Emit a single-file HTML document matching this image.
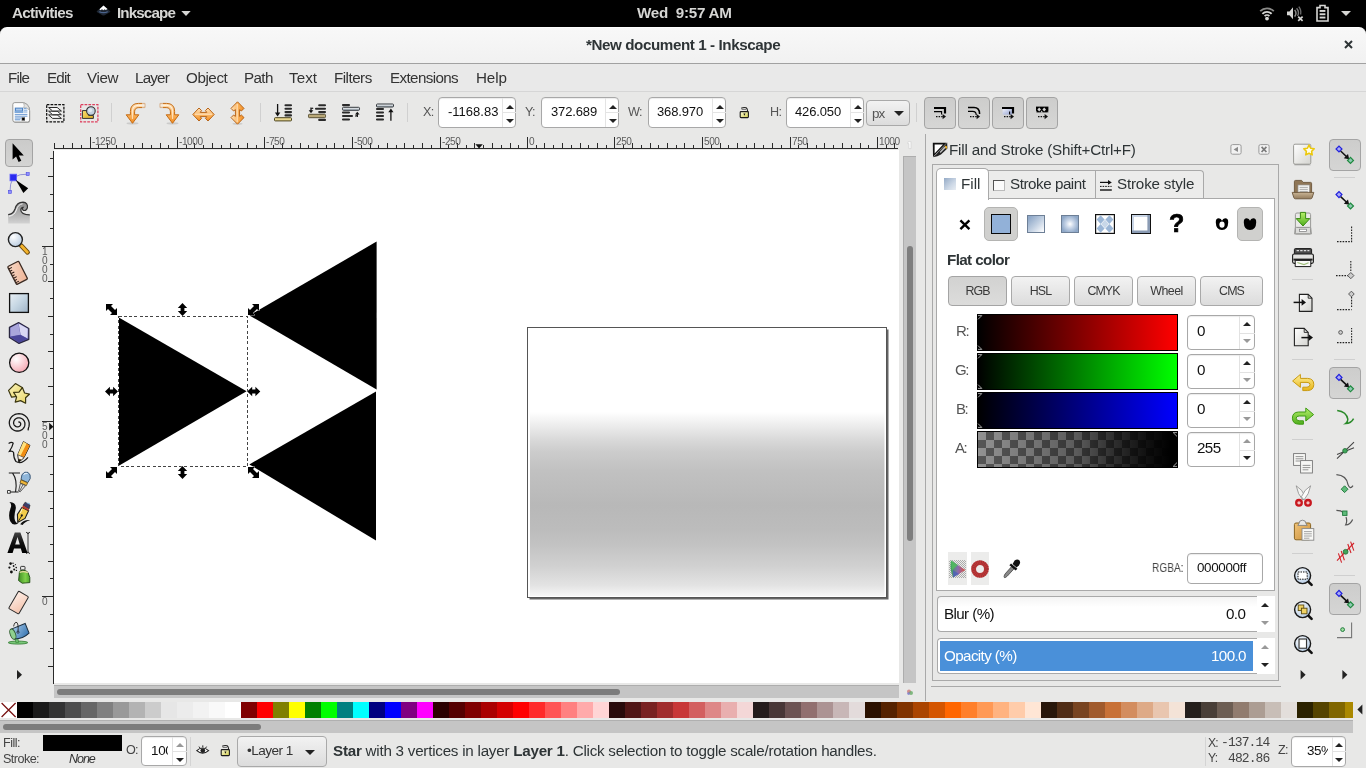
<!DOCTYPE html>
<html><head><meta charset="utf-8"><title>Inkscape</title>
<style>
*{box-sizing:border-box;margin:0;padding:0}
html,body{width:1366px;height:768px;overflow:hidden;background:#e8e8e7;-webkit-font-smoothing:antialiased;font-family:"Liberation Sans",sans-serif;color:#2e3436}
.a{position:absolute}
.t{position:absolute;white-space:nowrap;line-height:1;will-change:transform}
svg{position:absolute;overflow:visible}
#topbar{left:0;top:0;width:1366px;height:28px;background:#000}
#topbar .t{color:#d6d6d4;font-weight:bold;font-size:15.2px;top:5px}
#titlebar{left:0;top:27px;width:1366px;height:37px;background:linear-gradient(#f8f8f8,#f1f1f1);border-top-left-radius:7px;border-top-right-radius:7px;border-bottom:1px solid #a1a1a1;border-top:1px solid #fff}
#menubar{left:0;top:64px;width:1366px;height:28px;background:#e9e9e9;border-bottom:1px solid #d6d6d6}
#menubar .t{font-size:15.2px;top:5.6px;color:#333}
.entry{position:absolute;background:#fff;border:1px solid #a8a8a8;border-radius:4px;box-shadow:inset 0 1px 1px rgba(0,0,0,.08)}
.btn{position:absolute;border:1px solid #a9a9a9;border-radius:4px;background:linear-gradient(#f2f2f2,#dcdcdc)}
.btnp{position:absolute;border:1px solid #a4a4a4;border-radius:4px;background:linear-gradient(#cdcdcc,#d6d6d5)}
.lbl{color:#555;font-size:12.6px;letter-spacing:-.7px}
.val{color:#111;font-size:13px;letter-spacing:-.14px}
.sep{position:absolute;width:1px;background:#d0d0d0}
.hsep{position:absolute;height:1px;background:#cfcfcf}
.up{position:absolute;width:0;height:0;border-left:4px solid transparent;border-right:4px solid transparent;border-bottom:4px solid #222}
.dn{position:absolute;width:0;height:0;border-left:4px solid transparent;border-right:4px solid transparent;border-top:4px solid #222}
.g.up{border-bottom-color:#999}.g.dn{border-top-color:#999}
</style></head><body>
<!-- TOP BAR -->
<div id="topbar" class="a">
 <span class="t" style="left:12px;letter-spacing:-.68px">Activities</span>
 <span class="t" style="left:116.8px;letter-spacing:-.88px">Inkscape</span>
 <span class="t" style="left:637px;letter-spacing:-.27px;word-spacing:0">Wed&nbsp; 9:57 AM</span>
 <svg style="left:96px;top:5px" width="15" height="11" viewBox="0 0 15 11"><path d="M7.5 .5 L14.3 6.3 Q14.5 7.2 13.4 7.6 L8.6 10.2 Q7.5 10.7 6.4 10.2 L1.6 7.6 Q.5 7.2 .7 6.3 Z" fill="#1f2733"/><path d="M7.5 .6 L11.5 4 L9.8 5 L8.6 4.2 L7.4 5.2 L6 4.2 L4.4 5.2 L3.4 4.2 Z" fill="#fff"/><path d="M2.5 7 Q7.5 9.6 12.5 7 L11.2 6.2 Q7.5 8 3.8 6.2Z" fill="#5e7fb5" opacity=".7"/></svg>
 <svg style="left:181px;top:11px" width="10" height="5" viewBox="0 0 10 5"><path d="M.3 0H9.7L5 5Z" fill="#d6d6d4"/></svg>
 <!-- wifi -->
 <svg style="left:1259px;top:6px" width="16" height="15" viewBox="0 0 16 15"><g fill="none" stroke-linecap="butt"><path d="M1.2 5.2 A9.6 9.6 0 0 1 14.8 5.2" stroke="#8a8a88" stroke-width="1.8"/><path d="M3.4 7.8 A6.5 6.5 0 0 1 12.6 7.8" stroke="#d6d6d4" stroke-width="1.9"/><path d="M5.6 10.1 A3.4 3.4 0 0 1 10.4 10.1" stroke="#d6d6d4" stroke-width="1.8"/></g><circle cx="8" cy="12.6" r="1.9" fill="#d6d6d4"/></svg>
 <!-- volume -->
 <svg style="left:1286px;top:5px" width="18" height="17" viewBox="0 0 18 17"><path d="M1 6.5H3.5L7 2.2V14.2L3.5 10.2H1Z" fill="#d6d6d4"/><g fill="none"><path d="M8.6 5 A4.6 4.6 0 0 1 8.6 11.6" stroke="#8d8d8b" stroke-width="1.5"/><path d="M10.6 3.2 A7 7 0 0 1 11.6 11" stroke="#777" stroke-width="1.4"/><path d="M12.8 1.6 A9.4 9.4 0 0 1 14.6 9.5" stroke="#6a6a6a" stroke-width="1.4"/></g><path d="M12.2 11.6 L16.6 15.8 M16.6 11.6 L12.2 15.8" stroke="#d6d6d4" stroke-width="1.7"/></svg>
 <!-- battery -->
 <svg style="left:1316px;top:5px" width="13" height="17" viewBox="0 0 13 17"><path d="M4 .5H9V2.6H12V16H1V2.6H4Z" fill="none" stroke="#d6d6d4" stroke-width="1.6"/><rect x="3.6" y="5" width="5.8" height="1.9" fill="#d6d6d4"/><rect x="3.6" y="8.3" width="5.8" height="1.9" fill="#d6d6d4"/><rect x="3.6" y="11.6" width="5.8" height="1.9" fill="#d6d6d4"/></svg>
 <svg style="left:1341px;top:11px" width="10" height="5" viewBox="0 0 10 5"><path d="M0 0H10L5 5Z" fill="#d6d6d4"/></svg>
</div>
<!-- TITLE BAR -->
<div class="a" style="left:0;top:27px;width:1366px;height:10px;background:#000"></div>
<div id="titlebar" class="a">
 <span class="t" id="title" style="left:586px;top:9px;font-size:15.2px;font-weight:bold;color:#2e3436;letter-spacing:-.42px">*New document 1 - Inkscape</span>
 <svg style="left:1343.5px;top:12.4px" width="9" height="9" viewBox="0 0 9 9"><path d="M1 1L8 8M8 1L1 8" stroke="#2e3436" stroke-width="2"/></svg>
</div>
<!-- MENU BAR -->
<div id="menubar" class="a">
 <span class="t" style="left:8.4px;letter-spacing:-0.82px">File</span>
 <span class="t" style="left:47.4px;letter-spacing:-0.82px">Edit</span>
 <span class="t" style="left:87px;letter-spacing:-0.42px">View</span>
 <span class="t" style="left:135.4px;letter-spacing:-0.82px">Layer</span>
 <span class="t" style="left:186px;letter-spacing:-0.42px">Object</span>
 <span class="t" style="left:244px;letter-spacing:-0.62px">Path</span>
 <span class="t" style="left:289px;letter-spacing:0.08px">Text</span>
 <span class="t" style="left:334px;letter-spacing:-0.52px">Filters</span>
 <span class="t" style="left:390px;letter-spacing:-0.62px">Extensions</span>
 <span class="t" style="left:476px;letter-spacing:-0.12px">Help</span>
</div>
<!-- TOOLBAR -->
<svg width="0" height="0" style="position:absolute"><defs>
 <linearGradient id="og" x1="0" y1="0" x2="0" y2="1"><stop offset="0" stop-color="#ffe3bd"/><stop offset=".55" stop-color="#fbb560"/><stop offset="1" stop-color="#f08a1d"/></linearGradient>
 <linearGradient id="ogh" x1="0" y1="0" x2="1" y2="0"><stop offset="0" stop-color="#ffe3bd"/><stop offset=".5" stop-color="#fbb560"/><stop offset="1" stop-color="#f08a1d"/></linearGradient>
 <linearGradient id="paper" x1="0" y1="0" x2="1" y2="1"><stop offset="0" stop-color="#fff"/><stop offset="1" stop-color="#d4d4d0"/></linearGradient>
 <linearGradient id="silv" x1="0" y1="0" x2="0" y2="1"><stop offset="0" stop-color="#fff"/><stop offset="1" stop-color="#9aa7b3"/></linearGradient>
</defs></svg>
<!-- icon: select all in all layers -->
<svg style="left:12px;top:102px" width="19" height="21" viewBox="0 0 19 21"><path d="M.8 2.6Q.8 .6 2.8 .6H11.6Q17.4 2.4 17.6 8.4V18Q17.6 20 15.6 20H2.8Q.8 20 .8 18Z" fill="#6a6a6a" opacity=".55" transform="translate(.5 .7)"/><path d="M.8 2.6Q.8 .6 2.8 .6H11.6Q17.4 2.4 17.6 8.4V18Q17.6 20 15.6 20H2.8Q.8 20 .8 18Z" fill="#fdfdfd" stroke="#8e8e8c" stroke-width=".9"/><path d="M11.6 .8Q12.8 4 11.6 5.8Q15 5.2 17.4 8Q17 2.6 11.6 .8Z" fill="#e2e2e0" stroke="#9a9a98" stroke-width=".6"/><rect x="2.8" y="5.6" width="8.4" height="5.4" fill="#4d82c4"/><rect x="4" y="6.6" width="6" height="2" fill="#a9c7ea"/><rect x="2.8" y="8.8" width="8.4" height="2.2" fill="#7fa9da"/><path d="M12 6.4H14.6M12 8.2H15.4M12 10H15.4" stroke="#6b9bd4" stroke-width=".9"/><path d="M2.8 12.4H15.4M2.8 14.2H15.4" stroke="#5c8fce" stroke-width=".9"/><path d="M2.8 16H9.4M2.8 17.8H8.4" stroke="#5c8fce" stroke-width="1"/><path d="M9.6 15.6H13V16.4L12 17L13 17.6V18.4H9.6V17.6L10.6 17L9.6 16.4Z" fill="#000"/></svg>
<!-- icon: layers dashed -->
<svg style="left:46px;top:104px" width="19" height="19" viewBox="0 0 19 19"><rect x=".7" y=".7" width="17.2" height="17.2" fill="none" stroke="#111" stroke-width="1.25" stroke-dasharray="2.7 1.15"/><g fill="#fbfbfb" stroke="#1e1e1e" stroke-width=".95" stroke-linejoin="round"><path d="M2.6 10.9H11.2L15.4 14.4H6.6Z"/><path d="M2.6 7.2H11.2L15.4 10.7H6.6Z"/><path d="M2.6 3.5H11.2L15.4 7H6.6Z"/></g></svg>
<!-- icon: select in all -->
<svg style="left:80px;top:104px" width="19" height="19" viewBox="0 0 19 19"><defs><linearGradient id="ylw" x1="0" y1="0" x2="1" y2="1"><stop offset="0" stop-color="#fbe072"/><stop offset="1" stop-color="#dcae22"/></linearGradient></defs><rect x=".7" y=".7" width="17.2" height="17.2" fill="none" stroke="#dd3f5e" stroke-width="1.25" stroke-dasharray="2.7 1.15"/><path d="M2.4 6.6H8L8.6 11.4H13.4V14.4H2.4Z" fill="url(#ylw)" stroke="#333" stroke-width="1"/><circle cx="10.9" cy="7" r="4.3" fill="#c3d2df" stroke="#333" stroke-width="1.1"/><circle cx="10.2" cy="6.2" r="2" fill="#e4ecf3" opacity=".9"/></svg>
<div class="sep" style="left:111px;top:103px;height:19px"></div>
<!-- rotate ccw -->
<svg style="left:125px;top:101px" width="22" height="24" viewBox="0 0 22 24"><ellipse cx="7.5" cy="22.4" rx="6" ry="1.1" fill="#000" opacity=".12"/><path d="M20 2.4H13.5Q5.4 2.4 5.4 10.5V13.8H1.2L7.5 22.3L13.8 13.8H9.6V10.8Q9.6 6.6 13.8 6.6H20Z" fill="url(#og)" stroke="#c46a12" stroke-width="1" stroke-linejoin="round"/><path d="M19.5 4.4H13.5Q7.4 4.4 7.4 10.8V18" fill="none" stroke="#fff" stroke-width=".9" opacity=".75"/><rect x="17" y="1" width="5" height="7" fill="#e8e8e7" opacity=".55"/></svg>
<!-- rotate cw -->
<svg style="left:157.5px;top:101px" width="22" height="24" viewBox="0 0 22 24"><g transform="translate(22,0) scale(-1,1)"><ellipse cx="7.5" cy="22.4" rx="6" ry="1.1" fill="#000" opacity=".12"/><path d="M20 2.4H13.5Q5.4 2.4 5.4 10.5V13.8H1.2L7.5 22.3L13.8 13.8H9.6V10.8Q9.6 6.6 13.8 6.6H20Z" fill="url(#og)" stroke="#c46a12" stroke-width="1" stroke-linejoin="round"/><path d="M19.5 4.4H13.5Q7.4 4.4 7.4 10.8V18" fill="none" stroke="#fff" stroke-width=".9" opacity=".75"/><rect x="17" y="1" width="5" height="7" fill="#e8e8e7" opacity=".55"/></g></svg>
<!-- flip h -->
<svg style="left:191.5px;top:107px" width="23" height="15" viewBox="0 0 23 15"><path d="M.8 7.5L7 1L9.6 3.6L8.2 5.4H14.8L13.4 3.6L16 1L22.2 7.5L16 14L13.4 11.4L14.8 9.6H8.2L9.6 11.4L7 14Z" fill="url(#og)" stroke="#b8651a" stroke-width="1" stroke-linejoin="round"/><path d="M3 7.2H20" stroke="#fff" stroke-width=".9" opacity=".7"/></svg>
<!-- flip v -->
<svg style="left:230px;top:101px" width="15" height="24" viewBox="0 0 15 24"><ellipse cx="7.5" cy="22.8" rx="5" ry="1" fill="#000" opacity=".12"/><path d="M7.5 .8L14 7.4L11.4 10L9.6 8.6V15.4L11.4 14L14 16.6L7.5 23.2L1 16.6L3.6 14L5.4 15.4V8.6L3.6 10L1 7.4Z" fill="url(#ogh)" stroke="#b8651a" stroke-width="1" stroke-linejoin="round"/><path d="M7.2 3V21" stroke="#fff" stroke-width=".9" opacity=".7"/></svg>
<div class="sep" style="left:260px;top:103px;height:19px"></div>
<!-- lower to bottom -->
<svg style="left:274px;top:103px" width="18" height="19" viewBox="0 0 18 19"><g stroke="#2a2a2a" stroke-width="2.1" stroke-linecap="round"><path d="M11.5 2.2H17M11.5 5.7H17M11.5 9.1H17M11.5 12.4H17"/></g><path d="M3.6 1V11" stroke="#111" stroke-width="1.3"/><path d="M.9 9.6H6.3L3.6 13.4Z" fill="#111"/><rect x=".5" y="14.7" width="17" height="3.2" rx=".8" fill="#ead891" stroke="#4a431f" stroke-width="1"/></svg>
<!-- lower -->
<svg style="left:308px;top:103px" width="18" height="19" viewBox="0 0 18 19"><g stroke="#2a2a2a" stroke-width="2.1" stroke-linecap="round"><path d="M11.2 2.2H17M8 5.7H17M11.2 9.1H17M11.2 16.9H17"/></g><path d="M3 4.6V8" stroke="#111" stroke-width="1.3"/><path d="M5.2 4.9L3.4 5.8" stroke="#111" stroke-width="1.1"/><path d="M.7 7.2H5.3L3 10.2Z" fill="#111"/><rect x=".5" y="11.3" width="17" height="3.4" rx=".9" fill="#b9a878" stroke="#5a5236" stroke-width="1"/></svg>
<!-- raise -->
<svg style="left:342px;top:103px" width="18" height="19" viewBox="0 0 18 19"><g stroke="#2a2a2a" stroke-width="2.1" stroke-linecap="round"><path d="M1 2.1H7M1 9.5H7M1 13H10M1 16.5H7"/></g><rect x=".5" y="4.3" width="17" height="3" rx=".9" fill="url(#silv)" stroke="#33383d" stroke-width="1"/><path d="M15.3 10.6V14" stroke="#111" stroke-width="1.3"/><path d="M13.2 13.3L14.8 12.5" stroke="#111" stroke-width="1.1"/><path d="M13 11.6H17.6L15.3 8.8Z" fill="#111"/></svg>
<!-- raise to top -->
<svg style="left:376px;top:103px" width="18" height="19" viewBox="0 0 18 19"><g stroke="#2a2a2a" stroke-width="2.1" stroke-linecap="round"><path d="M1 6H7M1 9.5H7M1 13H7M1 16.5H7"/></g><rect x=".5" y="1" width="17" height="3" rx=".9" fill="url(#silv)" stroke="#33383d" stroke-width="1"/><path d="M14.9 8V17.8" stroke="#111" stroke-width="1.3"/><path d="M12.3 9.2H17.5L14.9 5.4Z" fill="#111"/></svg>
<div class="sep" style="left:407px;top:103px;height:19px"></div>
<!-- XYWH -->
<span class="t lbl" style="left:422.6px;top:106px">X:</span>
<div class="entry" style="left:438px;top:97px;width:78px;height:31px"><div class="a" style="left:63px;top:0;width:1px;height:29px;background:#e4e4e4"></div><div class="a" style="left:63px;top:14px;width:14px;height:1px;background:#e4e4e4"></div><div class="up" style="left:66.5px;top:6.5px"></div><div class="dn" style="left:66.5px;top:20.5px"></div></div>
<span class="t val" style="left:448.2px;top:105.2px;letter-spacing:0">-1168.83</span>
<span class="t lbl" style="left:524.6px;top:106px">Y:</span>
<div class="entry" style="left:541px;top:97px;width:78px;height:31px"><div class="a" style="left:63px;top:0;width:1px;height:29px;background:#e4e4e4"></div><div class="a" style="left:63px;top:14px;width:14px;height:1px;background:#e4e4e4"></div><div class="up" style="left:66.5px;top:6.5px"></div><div class="dn" style="left:66.5px;top:20.5px"></div></div>
<span class="t val" style="left:551px;top:105.2px">372.689</span>
<span class="t lbl" style="left:628px;top:106px">W:</span>
<div class="entry" style="left:648px;top:97px;width:78px;height:31px"><div class="a" style="left:63px;top:0;width:1px;height:29px;background:#e4e4e4"></div><div class="a" style="left:63px;top:14px;width:14px;height:1px;background:#e4e4e4"></div><div class="up" style="left:66.5px;top:6.5px"></div><div class="dn" style="left:66.5px;top:20.5px"></div></div>
<span class="t val" style="left:657.4px;top:105.2px">368.970</span>
<!-- lock -->
<svg style="left:739px;top:106px" width="11" height="13" viewBox="0 0 11 13"><defs><linearGradient id="lk" x1="0" y1="0" x2="1" y2="1"><stop offset="0" stop-color="#fdfde0"/><stop offset="1" stop-color="#d0cc4a"/></linearGradient></defs><path d="M2.2 2.2Q5 1 7.2 1.8Q8.4 2.6 8.8 6" fill="none" stroke="#222" stroke-width="1.1"/><path d="M2.6 3.4H7" stroke="#555" stroke-width=".8"/><rect x="1.2" y="5.6" width="8.2" height="6" rx=".8" fill="url(#lk)" stroke="#1a1a1a" stroke-width="1.1"/><path d="M4.4 7.6H6.4L5.4 9.8Z" fill="#111"/></svg>
<span class="t lbl" style="left:769.6px;top:106px">H:</span>
<div class="entry" style="left:786px;top:97px;width:78px;height:31px"><div class="a" style="left:63px;top:0;width:1px;height:29px;background:#e4e4e4"></div><div class="a" style="left:63px;top:14px;width:14px;height:1px;background:#e4e4e4"></div><div class="up" style="left:66.5px;top:6.5px"></div><div class="dn" style="left:66.5px;top:20.5px"></div></div>
<span class="t val" style="left:795.3px;top:105.2px">426.050</span>
<div class="btn" style="left:866px;top:100px;width:44px;height:26px"></div>
<span class="t lbl" style="left:871.6px;top:106.5px;font-size:13.4px;letter-spacing:-.9px">px</span>
<div class="dn" style="left:894px;top:111px;border-left-width:5px;border-right-width:5px;border-top-width:5px"></div>
<div class="sep" style="left:916px;top:103px;height:19px"></div>
<div class="btnp" style="left:924px;top:97px;width:32px;height:32px"></div>
<div class="btnp" style="left:958px;top:97px;width:32px;height:32px"></div>
<div class="btnp" style="left:992px;top:97px;width:32px;height:32px"></div>
<div class="btnp" style="left:1026px;top:97px;width:32px;height:32px"></div>
<svg style="left:924px;top:97px" width="136" height="32" viewBox="0 0 136 32">
<defs><g id="darr"><path d="M0 0H7" stroke="#111" stroke-width="1.2" stroke-dasharray="1.5 1.1"/><path d="M6.6 -2.6L10 0L6.6 2.6Z" fill="#111"/></g><linearGradient id="bl3" x1="0" y1="0" x2="1" y2="1"><stop offset="0" stop-color="#f4f6ff"/><stop offset="1" stop-color="#8a9ad0"/></linearGradient></defs>
<!-- 1 -->
<path d="M10 11H21V16.6" fill="none" stroke="#000" stroke-width="2.2"/><path d="M10 14.6H17.6V17.6" fill="none" stroke="#000" stroke-width="1.1"/><use href="#darr" x="12" y="19.6"/>
<!-- 2 -->
<path d="M44 10.6H50Q55.6 10.6 55.6 17" fill="none" stroke="#000" stroke-width="1.5"/><path d="M44 14.4H48.6Q52.2 14.4 52.2 18" fill="none" stroke="#000" stroke-width="1.1"/><use href="#darr" x="46" y="19.6"/>
<!-- 3 -->
<path d="M78.6 12H88V17.6H78.6Z" fill="url(#bl3)" opacity=".9"/><path d="M78 11H89V16.6" fill="none" stroke="#000" stroke-width="2.2"/><path d="M85.6 14.4V17.6" fill="none" stroke="#000" stroke-width="1.1"/><use href="#darr" x="80" y="19.6"/>
<!-- 4 -->
<path d="M112 9.6H124.4V15.4H112Z" fill="#000"/><g fill="#d6d6d5"><path d="M115.2 10.6L117 12.5L115.2 14.4L113.4 12.5Z"/><path d="M120.2 10.6L122 12.5L120.2 14.4L118.4 12.5Z"/><path d="M112 13.4L113 15.4H112ZM117.7 13.6L118.9 15.4H116.5ZM124.4 13.4V15.4H123.4Z"/></g><use href="#darr" x="114" y="19.6"/>
</svg>
<!-- RULERS -->
<svg style="left:0;top:0" width="1366" height="768" viewBox="0 0 1366 768" shape-rendering="crispEdges"><path d="M55 148.5H898" stroke="#2a2a2a" stroke-width="1" fill="none"/><path d="M54.5 143.3V148.5M63.5 144.9V148.5M72.5 143.3V148.5M81.5 144.9V148.5M90.5 136.5V148.5M98.5 144.9V148.5M107.5 143.3V148.5M116.5 144.9V148.5M124.5 143.3V148.5M133.5 144.9V148.5M142.5 143.3V148.5M151.5 144.9V148.5M160.5 143.3V148.5M168.5 144.9V148.5M177.5 136.5V148.5M186.5 144.9V148.5M194.5 143.3V148.5M203.5 144.9V148.5M212.5 143.3V148.5M221.5 144.9V148.5M230.5 143.3V148.5M238.5 144.9V148.5M247.5 143.3V148.5M256.5 144.9V148.5M264.5 136.5V148.5M273.5 144.9V148.5M282.5 143.3V148.5M291.5 144.9V148.5M300.5 143.3V148.5M308.5 144.9V148.5M317.5 143.3V148.5M326.5 144.9V148.5M334.5 143.3V148.5M343.5 144.9V148.5M352.5 136.5V148.5M361.5 144.9V148.5M370.5 143.3V148.5M378.5 144.9V148.5M387.5 143.3V148.5M396.5 144.9V148.5M404.5 143.3V148.5M413.5 144.9V148.5M422.5 143.3V148.5M431.5 144.9V148.5M440.5 136.5V148.5M448.5 144.9V148.5M457.5 143.3V148.5M466.5 144.9V148.5M474.5 143.3V148.5M483.5 144.9V148.5M492.5 143.3V148.5M501.5 144.9V148.5M510.5 143.3V148.5M518.5 144.9V148.5M527.5 136.5V148.5M536.5 144.9V148.5M544.5 143.3V148.5M553.5 144.9V148.5M562.5 143.3V148.5M571.5 144.9V148.5M580.5 143.3V148.5M588.5 144.9V148.5M597.5 143.3V148.5M606.5 144.9V148.5M614.5 136.5V148.5M623.5 144.9V148.5M632.5 143.3V148.5M641.5 144.9V148.5M650.5 143.3V148.5M658.5 144.9V148.5M667.5 143.3V148.5M676.5 144.9V148.5M684.5 143.3V148.5M693.5 144.9V148.5M702.5 136.5V148.5M711.5 144.9V148.5M720.5 143.3V148.5M728.5 144.9V148.5M737.5 143.3V148.5M746.5 144.9V148.5M754.5 143.3V148.5M763.5 144.9V148.5M772.5 143.3V148.5M781.5 144.9V148.5M790.5 136.5V148.5M798.5 144.9V148.5M807.5 143.3V148.5M816.5 144.9V148.5M824.5 143.3V148.5M833.5 144.9V148.5M842.5 143.3V148.5M851.5 144.9V148.5M860.5 143.3V148.5M868.5 144.9V148.5M877.5 136.5V148.5M886.5 144.9V148.5M894.5 143.3V148.5" stroke="#2a2a2a" stroke-width="1" fill="none"/>
<path d="M53.5 151V684" stroke="#2a2a2a" stroke-width="1" fill="none"/><path d="M47.9 666.5H53.5M49.9 648.5H53.5M47.9 631.5H53.5M49.9 614.5H53.5M41.5 596.5H53.5M49.9 578.5H53.5M47.9 561.5H53.5M49.9 544.5H53.5M47.9 526.5H53.5M49.9 508.5H53.5M47.9 491.5H53.5M49.9 474.5H53.5M47.9 456.5H53.5M49.9 438.5H53.5M41.5 421.5H53.5M49.9 404.5H53.5M47.9 386.5H53.5M49.9 368.5H53.5M47.9 351.5H53.5M49.9 334.5H53.5M47.9 316.5H53.5M49.9 298.5H53.5M47.9 281.5H53.5M49.9 264.5H53.5M41.5 246.5H53.5M49.9 228.5H53.5M47.9 211.5H53.5M49.9 194.5H53.5M47.9 176.5H53.5M49.9 158.5H53.5" stroke="#2a2a2a" stroke-width="1" fill="none"/></svg>
<span class="t rl" style="left:92.3px;top:137px">-1250</span>
<span class="t rl" style="left:179.3px;top:137px">-1000</span>
<span class="t rl" style="left:266.3px;top:137px">-750</span>
<span class="t rl" style="left:354.3px;top:137px">-500</span>
<span class="t rl" style="left:442.3px;top:137px">-250</span>
<span class="t rl" style="left:529.3px;top:137px">0</span>
<span class="t rl" style="left:616.3px;top:137px">250</span>
<span class="t rl" style="left:704.3px;top:137px">500</span>
<span class="t rl" style="left:792.3px;top:137px">750</span>
<span class="t rl" style="left:879.3px;top:137px">1000</span>
<span class="t rl" style="left:42.2px;top:597.0px">0</span>
<span class="t rl" style="left:42.2px;top:422.0px">5</span>
<span class="t rl" style="left:42.2px;top:431.0px">0</span>
<span class="t rl" style="left:42.2px;top:440.0px">0</span>
<span class="t rl" style="left:42.2px;top:247.0px">1</span>
<span class="t rl" style="left:42.2px;top:256.0px">0</span>
<span class="t rl" style="left:42.2px;top:265.0px">0</span>
<span class="t rl" style="left:42.2px;top:274.0px">0</span>
<!-- CANVAS -->
<div class="a" id="canvas" style="left:54px;top:150px;width:845px;height:533.4px;background:#fff"></div>
<svg style="left:0;top:0" width="1366" height="768" viewBox="0 0 1366 768">
 <defs><linearGradient id="pg" x1="0" y1="0" x2="0" y2="1"><stop offset="0" stop-color="#fff"/><stop offset=".31" stop-color="#fff"/><stop offset=".36" stop-color="#ededed"/><stop offset=".415" stop-color="#d9d9d9"/><stop offset=".46" stop-color="#cccccc"/><stop offset=".53" stop-color="#c1c1c1"/><stop offset=".66" stop-color="#b8b8b8"/><stop offset=".75" stop-color="#bcbcbc"/><stop offset=".81" stop-color="#c3c3c3"/><stop offset=".89" stop-color="#d1d1d1"/><stop offset=".96" stop-color="#e3e3e3"/><stop offset="1" stop-color="#f6f6f6"/></linearGradient></defs>
 <rect x="529.5" y="329.5" width="359" height="270" fill="#646464"/>
 <rect x="527.5" y="327.5" width="359" height="270" fill="#fff" stroke="#555" stroke-width="1" shape-rendering="crispEdges"/>
 <rect x="530" y="329" width="354.5" height="267" fill="url(#pg)"/>
 <g fill="#000"><path d="M118.4 317.3V466L246.6 391.2Z"/><path d="M376.6 241.6V389.4L249.4 315.4Z"/><path d="M376 391.6V540.6L249.4 464.4Z"/></g>
 <g fill="none" stroke-width="1" shape-rendering="crispEdges"><rect x="118.5" y="316.5" width="129" height="150" stroke="#fff"/><rect x="118.5" y="316.5" width="129" height="150" stroke="#444" stroke-dasharray="3 2.3"/></g>
 <defs>
  <path id="hd" d="M0 0H7L5 2L9 6L11 4V11H4L6 9L2 5L0 7Z"/>
  <path id="hv" d="M4.5 0L9.2 4.9H6.4V8.1H9.2L4.5 13L-.2 8.1H2.6V4.9H-.2Z"/>
  <path id="hh" d="M0 4.5L4.9 -.2V2.6H8.1V-.2L13 4.5L8.1 9.2V6.4H4.9V9.2Z"/>
 </defs>
 <g fill="#000" stroke="#fff" stroke-width=".7" paint-order="stroke">
  <use href="#hd" x="106" y="304"/><use href="#hd" transform="translate(259,304) scale(-1,1)"/>
  <use href="#hd" transform="translate(106,478) scale(1,-1)"/><use href="#hd" transform="translate(259,478) scale(-1,-1)"/>
  <use href="#hv" x="178" y="303"/><use href="#hv" x="178" y="466"/>
  <use href="#hh" x="105" y="387"/><use href="#hh" x="247.3" y="387"/>
 </g>
 <!-- ruler markers -->
 <path d="M475.4 144.2H482.8L479.1 148.6Z" fill="#111"/><path d="M49.2 422.8V430.6L53.4 426.7Z" fill="#111"/>
</svg>
<!-- LEFT TOOLBOX -->
<div class="btnp" style="left:5px;top:139px;width:28px;height:28px;background:linear-gradient(#cbcbca,#d4d4d3)"></div>
<svg style="left:0;top:0" width="60" height="768" viewBox="0 0 60 768">
<defs>
 <linearGradient id="twk" x1="0" y1="0" x2="0" y2="1"><stop offset="0" stop-color="#8a8a8a"/><stop offset="1" stop-color="#d2d2d2"/></linearGradient>
 <radialGradient id="lens" cx=".35" cy=".3" r=".8"><stop offset="0" stop-color="#fff"/><stop offset="1" stop-color="#b5c9de"/></radialGradient>
 <linearGradient id="rectg" x1="0" y1="0" x2="1" y2="1"><stop offset="0" stop-color="#eaf0f5"/><stop offset=".5" stop-color="#c5d6e3"/><stop offset="1" stop-color="#9fb3c6"/></linearGradient>
 <radialGradient id="ellg" cx=".35" cy=".3" r=".8"><stop offset="0" stop-color="#fff"/><stop offset="1" stop-color="#f5a3ae"/></radialGradient>
 <linearGradient id="starg" x1="0" y1="0" x2="1" y2="1"><stop offset="0" stop-color="#fdf6c6"/><stop offset="1" stop-color="#e6d35c"/></linearGradient>
 <linearGradient id="rulg" x1="0" y1="0" x2="1" y2="1"><stop offset="0" stop-color="#f7d9c7"/><stop offset="1" stop-color="#eeb395"/></linearGradient>
 <linearGradient id="erg" x1="0" y1="0" x2="1" y2="1"><stop offset="0" stop-color="#fdeee6"/><stop offset="1" stop-color="#f4c2ac"/></linearGradient>
 <linearGradient id="bkt" x1="0" y1="0" x2="1" y2="1"><stop offset="0" stop-color="#a8cbea"/><stop offset="1" stop-color="#2f6fae"/></linearGradient>
 <linearGradient id="spr" x1="0" y1="0" x2="1" y2="0"><stop offset="0" stop-color="#3f8f24"/><stop offset=".6" stop-color="#7fd04a"/><stop offset="1" stop-color="#4fa82c"/></linearGradient>
</defs>
<!-- 1 selector -->
<path d="M12.6 143.2V159.6L16.1 156.4L18.6 162L21.3 160.8L18.8 155.4H23.8Z" fill="#000"/>
<!-- 2 node -->
<path d="M13.5 177.5Q20 173.6 27.5 174.2M13.3 177.5Q9.6 184 10 191.6" fill="none" stroke="#7a7ad0" stroke-width=".8"/>
<rect x="10" y="174.2" width="6.6" height="6.6" fill="#2a2aee" stroke="#5d5dff" stroke-width=".8"/>
<rect x="26.2" y="172.6" width="3" height="3" fill="#8f8fff" stroke="#4a4ae0" stroke-width=".6"/><rect x="8.4" y="190.4" width="3" height="3" fill="#8f8fff" stroke="#4a4ae0" stroke-width=".6"/>
<path d="M15.6 179.8L28.2 188.2L23.4 193Z" fill="#000"/>
<!-- 3 tweak -->
<path d="M8.2 223.4V214.6Q13.2 214 15 209Q16.8 202.2 23 202.2Q28.2 202.6 27.4 207.8Q26.4 211 23.6 210.4Q21.6 209.4 23 207.4Q21 207.6 20.8 210Q21 214.6 29.8 214.8V223.4Z" fill="url(#twk)"/>
<path d="M8.2 214.6Q13.2 214 15 209Q16.8 202.2 23 202.2Q28.2 202.6 27.4 207.8Q26.4 211 23.6 210.4Q21.6 209.4 23 207.4Q21 207.6 20.8 210Q21 214.6 29.8 214.8" fill="none" stroke="#333" stroke-width="1.2"/>
<path d="M9 216.2Q14.4 215.6 16.4 210Q18 204.2 22.6 203.8" fill="none" stroke="#fff" stroke-width=".9"/>
<!-- 4 zoom -->
<path d="M21 245.4L27.6 252.4" stroke="#6a4a10" stroke-width="4.6" stroke-linecap="round"/><path d="M21.6 246L27.4 252.2" stroke="#f3b32c" stroke-width="2.8" stroke-linecap="round"/>
<circle cx="15.4" cy="239.6" r="7" fill="url(#lens)" stroke="#222" stroke-width="1.4"/>
<!-- 5 measure -->
<g transform="translate(17.6 272.8) rotate(-27)"><rect x="-6.2" y="-10" width="12.4" height="20" rx="1" fill="url(#rulg)" stroke="#3a2a22" stroke-width="1.3"/><path d="M-6 -7.4H-2.6M-6 -4.8H-3.6M-6 -2.2H-2.6M-6 .4H-3.6M-6 3H-2.6M-6 5.6H-3.6M-6 8H-2.6" stroke="#2a1a14" stroke-width="1"/></g>
<!-- 6 rect -->
<rect x="9.6" y="293.6" width="18.8" height="18.8" fill="url(#rectg)" stroke="#111" stroke-width="1.3"/>
<!-- 7 3d box -->
<path d="M18.6 322.6L28.8 328.6V339.4L19 343.4L9.4 337.4V327.4Z" fill="#5a55a8" stroke="#2a2740" stroke-width="1.2" stroke-linejoin="round"/>
<path d="M18.6 323.4L27.8 328.8L27.6 338.6L20.6 334.8Z" fill="#d9d8f4"/><path d="M18.4 323.4L10.4 327.8V336.6L20.4 334.8Z" fill="#a9a6dc"/><path d="M10.6 336.8L20.4 335L27.6 338.8L19 342.4Z" fill="#4a469a"/>
<!-- 8 ellipse -->
<circle cx="19.2" cy="362.8" r="9.6" fill="url(#ellg)" stroke="#111" stroke-width="1.3"/>
<!-- 9 star -->
<path d="M15.4 383.6L22.2 387.4L20.6 396L11.6 397.2L8.6 390.4Z" fill="url(#starg)" stroke="#3c3710" stroke-width="1.2" stroke-linejoin="round"/>
<path d="M22.4 387.6L24.6 393L29.4 394.2L25.6 397.8L25.6 403.2L20.6 400.6L15.2 402.2L16.6 397L13.6 392.4L19 392.2Z" fill="url(#starg)" stroke="#3c3710" stroke-width="1.2" stroke-linejoin="round"/>
<!-- 10 spiral -->
<path d="M18.4 422.0 L18.6 422.0 L18.9 422.0 L19.2 422.0 L19.5 422.1 L19.8 422.3 L20.0 422.5 L20.3 422.7 L20.5 423.0 L20.6 423.4 L20.7 423.8 L20.7 424.2 L20.6 424.6 L20.5 425.1 L20.2 425.5 L19.9 425.9 L19.6 426.2 L19.1 426.5 L18.6 426.7 L18.1 426.8 L17.5 426.9 L16.9 426.8 L16.3 426.7 L15.7 426.4 L15.2 426.0 L14.7 425.6 L14.3 425.1 L14.0 424.5 L13.7 423.8 L13.6 423.1 L13.6 422.3 L13.8 421.6 L14.0 420.9 L14.4 420.2 L14.9 419.5 L15.5 419.0 L16.2 418.5 L17.0 418.2 L17.9 417.9 L18.8 417.9 L19.7 417.9 L20.6 418.1 L21.5 418.5 L22.4 419.0 L23.1 419.6 L23.8 420.4 L24.3 421.3 L24.7 422.2 L24.9 423.3 L24.9 424.3 L24.8 425.4 L24.5 426.5 L24.0 427.5 L23.3 428.4 L22.5 429.2 L21.6 429.9 L20.5 430.5 L19.3 430.8 L18.1 431.0 L16.8 431.0 L15.6 430.8 L14.3 430.4 L13.2 429.8 L12.1 429.0 L11.2 428.0 L10.4 426.9 L9.9 425.7 L9.5 424.4 L9.3 423.0 L9.4 421.6 L9.7 420.2 L10.3 418.8 L11.0 417.6 L12.0 416.4 L13.1 415.5 L14.5 414.7 L15.9 414.1 L17.4 413.8 L19.0 413.7 L20.6 413.8 L22.2 414.2 L23.7 414.9 L25.1 415.8 L26.4 416.9 L27.4 418.2 L28.2 419.7 L28.8 421.3 L29.2 422.9 L29.2 424.7 L29.0 426.4 L28.4 428.1 L28.1 430.3" fill="none" stroke="#1a1a1a" stroke-width="1.3" stroke-linejoin="round"/>
<!-- 11 pencil -->
<path d="M8.6 443.6Q11.6 441.4 13.2 443.2Q12.4 447 9.4 451.4Q12.6 450.6 13.6 452.6Q13.4 458 16 461.6Q21.6 465 28 457.4" fill="none" stroke="#1a1a1a" stroke-width="1.2"/>
<path d="M23.4 441.6L30 445.4L24 457.6L18.8 462.2L17.8 454.6Z" fill="#f6a51e" stroke="#2a2a2a" stroke-width="1"/><path d="M23.4 441.8L26.8 443.6L20.6 456L17.9 454.6Z" fill="#ffe07a"/><path d="M26.8 443.6L29.8 445.4L23.8 457.4L20.6 456Z" fill="#f08c12"/><path d="M17.9 454.8L24 457.6L21.6 459.8L18.4 459Z" fill="#fdf3e4" stroke="#2a2a2a" stroke-width=".6"/><path d="M18.6 462L18.5 459.2L21 460Z" fill="#111"/>
<!-- 12 pen -->
<path d="M8.8 473H20M12.6 473.2Q17.6 480 15.6 491.6M8.6 492H18.6" fill="none" stroke="#1a1a1a" stroke-width="1.1"/><rect x="7.6" y="490.6" width="2.6" height="2.6" fill="#fff" stroke="#111" stroke-width=".8"/>
<path d="M22 474.6Q24.6 471 28 472.4Q31 474.4 30.2 478.6L27.8 482.6L21 479.6Z" fill="#8fb6da" stroke="#2c4a6a" stroke-width=".9"/><path d="M23.6 474.6Q25.6 472.8 27.6 473.6" stroke="#e4eef8" stroke-width="1.1" fill="none"/><path d="M21 479.8L27.6 482.8L26.4 485.6L20 482.8Z" fill="#f0b73a" stroke="#5d4a1c" stroke-width=".8"/><path d="M20.4 483.4L25.6 485.6L20.2 491.8L18.6 491Z" fill="#e4e4e4" stroke="#333" stroke-width=".8"/><path d="M22.8 485L19.6 491" stroke="#333" stroke-width=".7"/>
<!-- 13 calligraphy -->
<path d="M9.4 502Q16.4 502.4 15.8 508.4Q13.4 517.4 15.2 521Q16.4 523.4 18.4 523.2Q13 526.4 10.4 521.4Q7.6 515.4 10.8 507.6Q12 503.8 9.4 502Z" fill="#0a0a0a"/>
<path d="M20.2 524.2Q24 519.4 30.2 520.2Q24.6 521.6 22.6 525Z" fill="#111"/>
<path d="M22 507.4L28.6 510.8L25 518.4L17.8 522.4L17.4 514.4Z" fill="#f3cc4a" stroke="#1a1a1a" stroke-width="1.1"/><path d="M18 521.8L21.6 516" stroke="#1a1a1a" stroke-width=".9"/><circle cx="21.8" cy="515.4" r="1.1" fill="#1a1a1a"/><path d="M22.2 508.6L20.4 513" stroke="#fff5c8" stroke-width="1"/>
<path d="M23 505.4L25.2 502.2L30 505L29 509Z" fill="#3c3c6a" stroke="#222" stroke-width=".7"/><path d="M22 507.4L23 505.4L29 509L28.6 510.8Z" fill="#b83a2c"/><path d="M25.4 502.4L29.8 504.8L29.6 503Z" fill="#7fb2e0"/>
<!-- 14 text -->
<defs><linearGradient id="txg" x1="0" y1="0" x2="0" y2="1"><stop offset="0" stop-color="#444"/><stop offset=".5" stop-color="#111"/><stop offset="1" stop-color="#000"/></linearGradient></defs>
<path d="M7.4 553L14.8 532.4H20.4L27.6 553H22.2L20.8 548.6H14L12.6 553ZM15.2 544.6H19.8L17.5 537Z" fill="url(#txg)"/>
<path d="M28 532.4V553.2M26 532.2Q27.8 532.8 28 534Q28.2 532.8 30 532.2M26 553.6Q27.8 553 28 551.8Q28.2 553 30 553.6" fill="none" stroke="#222" stroke-width=".9"/>
<!-- 15 spray -->
<g fill="#111"><circle cx="10.6" cy="563.6" r="1.3"/><circle cx="9.4" cy="567.6" r="1.1"/><circle cx="11.4" cy="572" r="1.4"/><circle cx="13.6" cy="566" r=".9"/><circle cx="14.2" cy="569.4" r="1"/><circle cx="16.2" cy="567.6" r=".8"/><circle cx="13" cy="563.2" r=".7"/><circle cx="16.4" cy="570.4" r=".7"/><circle cx="15.4" cy="564.6" r=".6"/></g>
<rect x="20.6" y="566.4" width="4.4" height="3.6" rx=".8" fill="#e8e8e8" stroke="#222" stroke-width=".9"/>
<path d="M19.4 572.4Q19.4 570.2 22.8 570.2Q26.4 570.2 28 572.4L29.8 577.4V582.6L22.2 583.2L18.6 580.6Z" fill="url(#spr)" stroke="#1f4a12" stroke-width=".9"/><path d="M19.6 572.4Q23.6 570.6 27.8 572.6" stroke="#e8d9a0" stroke-width="1.3" fill="none"/>
<!-- 16 eraser -->
<g transform="translate(18.6 602.6) rotate(30)"><rect x="-5.8" y="-10" width="11.6" height="20" rx="1" fill="url(#erg)" stroke="#2a2a2a" stroke-width="1"/></g>
<!-- 17 bucket -->
<ellipse cx="18" cy="642.6" rx="9.8" ry="1.5" fill="#7ac77a" stroke="#2f7a2f" stroke-width=".8"/>
<path d="M15.6 632.4Q14.6 638.6 15.8 642.4H18.6Q17.4 638 18.2 633Z" fill="#6fc06f" stroke="#2f7a2f" stroke-width=".6"/>
<g transform="translate(20 631) rotate(-22)"><path d="M-8 -5H7.6V5.4Q0 8.4 -8 5.4Z" fill="url(#bkt)" stroke="#1d2f40" stroke-width="1"/><ellipse cx="-7.8" cy=".2" rx="2.6" ry="5.4" fill="#8fd08f" stroke="#2d5a2d" stroke-width=".9"/></g>
<path d="M13.6 626.4Q14.6 621.4 17 622.6Q18.6 624.6 18 631.6" fill="none" stroke="#222" stroke-width=".9"/><circle cx="18" cy="632.2" r="1.1" fill="none" stroke="#223" stroke-width=".8"/>
<!-- arrow -->
<path d="M17 670V679.6L22 674.8Z" fill="#222"/>
</svg>
<!-- SCROLLBARS -->
<div class="a" style="left:903px;top:156px;width:13.4px;height:527px;background:#c5c5c5;border:1px solid #adadad;border-bottom:none;border-right:none"></div>
<div class="a" style="left:907px;top:246px;width:6px;height:295px;background:#7e7e7e;border-radius:3px"></div>

<div class="a" style="left:54px;top:685.4px;width:845px;height:12.2px;background:#c5c5c5;border-top:1px solid #adadad"></div>
<div class="a" style="left:57px;top:689px;width:563px;height:6px;background:#7c7c7c;border-radius:3px"></div>
<!-- tiny icons -->
<svg style="left:905px;top:140px" width="10" height="10" viewBox="0 0 10 10"><path d="M3.2 1.6H6V8.6H3.8V3.6H2.6Z" fill="#fdfdfd" stroke="#d4d4d4" stroke-width=".8"/></svg>
<svg style="left:905px;top:687px" width="10" height="10" viewBox="0 0 10 10"><circle cx="4" cy="4.6" r="2" fill="#c77" opacity=".8"/><circle cx="6" cy="6" r="2" fill="#6a6" opacity=".8"/><circle cx="3.6" cy="6.6" r="1.4" fill="#77c" opacity=".8"/></svg>
<!-- DOCK -->
<div class="a" style="left:925px;top:134px;width:1px;height:567px;background:#a9a9a9"></div>
<div class="a" style="left:931px;top:686px;width:350px;height:1px;background:#a9a9a9"></div>
<div class="a" style="left:932px;top:164px;width:347px;height:517px;border:1px solid #a9a9a9;background:#e8e8e7"></div>
<!-- dock title -->
<svg style="left:932px;top:142px" width="16" height="16" viewBox="0 0 16 16"><path d="M.8 .8H14.6L1 15Z" fill="#111"/><path d="M2.6 2.4H11L2.6 11.4Z" fill="#fff"/><path d="M15.2 .6L15.4 6.6L9 12.6Q6 15 .8 15.2Q5 12.6 6.6 9.6L12.6 3.2Z" fill="#222"/><path d="M13.4 3.4L15.2 4.8L14.6 7L12.6 5.6Z" fill="#f2b21c"/><path d="M12.4 4.6L13.8 5.8L8.6 11L7.6 10Z" fill="#bbb"/></svg>
<span class="t" style="left:949.4px;top:142.1px;font-size:15.2px;color:#2e3436;letter-spacing:-0.19px">Fill and Stroke (Shift+Ctrl+F)</span>
<svg style="left:1230px;top:144px" width="12" height="11" viewBox="0 0 12 11"><rect x=".9" y=".6" width="10.2" height="9.6" rx="1.6" fill="#f2f2f2" stroke="#9a9a9a" stroke-width="1"/><path d="M8 2.8V8L3.6 5.4Z" fill="#8a8a8a"/></svg>
<svg style="left:1258px;top:144px" width="12" height="11" viewBox="0 0 12 11"><rect x=".9" y=".6" width="10.2" height="9.6" rx="1.6" fill="#f2f2f2" stroke="#9a9a9a" stroke-width="1"/><path d="M3.6 2.8L8.4 8M8.4 2.8L3.6 8" stroke="#7a7a7a" stroke-width="1.7"/></svg>
<!-- notebook -->
<div class="a" style="left:988px;top:170px;width:108px;height:29px;background:#ececeb;border:1px solid #a9a9a9;border-left:none;border-bottom:none"></div>
<div class="a" style="left:1095px;top:170px;width:109px;height:29px;background:#ececeb;border:1px solid #a9a9a9;border-bottom:none;border-top-right-radius:4px"></div>
<div class="a" style="left:936px;top:198px;width:339px;height:393px;background:#fff;border:1px solid #a9a9a9"></div>
<div class="a" style="left:936px;top:168px;width:53px;height:32px;background:#fff;border:1px solid #a9a9a9;border-bottom:none;border-top-left-radius:5px;border-top-right-radius:5px"></div>
<div class="a" style="left:944px;top:178px;width:12px;height:12px;background:linear-gradient(135deg,#94aac6,#cdd8e6 60%,#e8edf3)"></div>
<span class="t" style="left:961.4px;top:176px;font-size:15.2px;color:#2e3436;letter-spacing:-0.01px">Fill</span>
<div class="a" style="left:993px;top:180px;width:12px;height:11px;background:#fbfbfb;border:1.3px solid #555;border-right-color:#bbb;border-bottom-color:#bbb"></div>
<span class="t" style="left:1010.4px;top:176px;font-size:15.2px;color:#2e3436;letter-spacing:-0.46px">Stroke paint</span>
<svg style="left:1099px;top:179px" width="14" height="13" viewBox="0 0 14 13"><path d="M1 3.4H9.6" stroke="#111" stroke-width="1.2"/><path d="M9 1L12.8 3.4L9 5.8Z" fill="#111"/><path d="M1 7.4H12.6" stroke="#111" stroke-width="1" stroke-dasharray="1.6 1"/><path d="M1 11H12.8" stroke="#111" stroke-width="1.4"/></svg>
<span class="t" style="left:1117.4px;top:176px;font-size:15.2px;color:#2e3436;letter-spacing:-0.18px">Stroke style</span>
<!-- paint type row -->
<svg style="left:959px;top:218.6px" width="12" height="12" viewBox="0 0 12 12"><path d="M1.4 1.4L10.4 10.2M10.4 1.4L1.4 10.2" stroke="#000" stroke-width="2.4"/></svg>
<div class="btnp" style="left:984px;top:207px;width:34px;height:34px;background:#d0d0ce;border-color:#b4b4b2;border-radius:5px"></div>
<div class="a" style="left:991px;top:214px;width:20px;height:20px;background:#92b1d8;border:1.3px solid #0a0a0a"></div>
<div class="a" style="left:1027px;top:215px;width:18px;height:18px;background:linear-gradient(135deg,#8fa8c8 10%,#c4d2e3 55%,#fafbfd 95%);border:1px solid #6d7f96"></div>
<div class="a" style="left:1061px;top:215px;width:18px;height:18px;background:radial-gradient(circle at 50% 50%,#fff 0%,#c9d6e8 35%,#8fa8c8 80%);border:1px solid #6d7f96"></div>
<svg style="left:1095px;top:214px" width="20" height="20" viewBox="0 0 20 20"><rect x=".6" y=".6" width="18.8" height="18.8" fill="#fff" stroke="#111" stroke-width="1.2"/><g fill="#9bb6d6"><path d="M5.6 1.2L9.6 5.6L5.6 10L1.6 5.6Z"/><path d="M14.4 1.2L18.4 5.6L14.4 10L10.4 5.6Z"/><path d="M5.6 10L9.6 14.4L5.6 18.8L1.6 14.4Z"/><path d="M14.4 10L18.4 14.4L14.4 18.8L10.4 14.4Z"/><path d="M10 5.8L13.8 10L10 14.2L6.2 10Z" opacity=".55"/></g></svg>
<div class="a" style="left:1131px;top:214px;width:20px;height:20px;background:#fff;border:1.2px solid #111;box-shadow:inset -2.6px -2.6px 0 #8a9bb4,inset 2px 2px 0 #c9d5e6"></div>
<span class="t" style="left:1169px;top:210.6px;font-size:25px;font-weight:bold;color:#000;-webkit-text-stroke:.7px #000">?</span>
<svg style="left:1215px;top:217px" width="14" height="14" viewBox="0 0 14 14"><path d="M.8 5.4Q.6 1.2 3.8 1.2Q6.2 1.2 7 3.8Q7.8 1.2 10.2 1.2Q13.4 1.2 13.2 5.4Q13 12.8 7 13Q1 12.8 .8 5.4Z" fill="#000"/><ellipse cx="7" cy="7.6" rx="2.6" ry="3.2" fill="#fff"/></svg>
<div class="btnp" style="left:1237px;top:207px;width:26px;height:34px;background:#d0d0ce;border-color:#b4b4b2;border-radius:5px"></div>
<svg style="left:1243px;top:217px" width="14" height="14" viewBox="0 0 14 14"><path d="M.8 5.4Q.6 1.2 3.8 1.2Q6.2 1.2 7 3.8Q7.8 1.2 10.2 1.2Q13.4 1.2 13.2 5.4Q13 12.8 7 13Q1 12.8 .8 5.4Z" fill="#000"/></svg>
<span class="t" style="left:947.4px;top:252.3px;font-size:15.2px;font-weight:bold;color:#2e3436;letter-spacing:-0.61px">Flat color</span>
<!-- mode buttons -->
<div class="btnp" style="left:948px;top:276px;width:59px;height:30px;background:linear-gradient(#d2d2d1,#dcdcdb)"></div>
<div class="btn" style="left:1011px;top:276px;width:59px;height:30px"></div>
<div class="btn" style="left:1074px;top:276px;width:59px;height:30px"></div>
<div class="btn" style="left:1137px;top:276px;width:59px;height:30px"></div>
<div class="btn" style="left:1200px;top:276px;width:63px;height:30px"></div>
<span class="t mb" style="left:948px;width:59px">RGB</span><span class="t mb" style="left:1011px;width:59px">HSL</span><span class="t mb" style="left:1074px;width:59px">CMYK</span><span class="t mb" style="left:1137px;width:59px;letter-spacing:-.5px">Wheel</span><span class="t mb" style="left:1200px;width:63px">CMS</span>
<!-- sliders -->
<div class="a" style="left:977px;top:314px;width:201px;height:37px;background:linear-gradient(90deg,#000,#f00);border:1.6px solid #000;border-left-width:1px"></div>
<div class="a" style="left:977px;top:353px;width:201px;height:37px;background:linear-gradient(90deg,#000,#0f0);border:1.6px solid #000;border-left-width:1px"></div>
<div class="a" style="left:977px;top:392px;width:201px;height:37px;background:linear-gradient(90deg,#000,#00f);border:1.6px solid #000;border-left-width:1px"></div>
<div class="a" style="left:977px;top:431px;width:201px;height:37px;border:1.4px solid #000;background:linear-gradient(90deg,rgba(0,0,0,0),rgba(0,0,0,.18) 25%,rgba(0,0,0,.38) 50%,rgba(0,0,0,.68) 68%,rgba(0,0,0,.88) 84%,#000 97%),conic-gradient(#565656 25%,#929292 0 50%,#565656 0 75%,#929292 0) 0 0/16px 16px"></div>
<svg style="left:977px;top:314px" width="201" height="154" viewBox="0 0 201 154"><g fill="none" stroke="#c8c8c8" stroke-width=".8"><path d="M1 1.6H4.8L1 5.4M1 35.4H4.8L1 31.6"/><path d="M1 40.6H4.8L1 44.4M1 74.4H4.8L1 70.6"/><path d="M1 79.6H4.8L1 83.4M1 113.4H4.8L1 109.6"/><path d="M200 118.6H196.2L200 122.4M200 152.4H196.2L200 148.6"/></g></svg>
<span class="t sl" style="left:955.6px;top:323px">R:</span><span class="t sl" style="left:954.8px;top:362px">G:</span><span class="t sl" style="left:955.6px;top:401px">B:</span><span class="t sl" style="left:955.4px;top:440px">A:</span>
<!-- spin entries -->
<div class="entry sp" style="top:315px"><i></i><b></b><div class="up" style="left:54.6px;top:6.4px"></div><div class="dn g" style="left:54.6px;top:22.8px"></div></div>
<div class="entry sp" style="top:354px"><i></i><b></b><div class="up" style="left:54.6px;top:6.4px"></div><div class="dn g" style="left:54.6px;top:22.8px"></div></div>
<div class="entry sp" style="top:393px"><i></i><b></b><div class="up" style="left:54.6px;top:6.4px"></div><div class="dn g" style="left:54.6px;top:22.8px"></div></div>
<div class="entry sp" style="top:432px"><i></i><b></b><div class="up g" style="left:54.6px;top:6.4px"></div><div class="dn" style="left:54.6px;top:22.8px"></div></div>
<span class="t sv" style="top:323px">0</span><span class="t sv" style="top:362px">0</span><span class="t sv" style="top:401px">0</span><span class="t sv" style="top:440px">255</span>
<!-- cms row -->
<div class="a" style="left:948px;top:552px;width:19px;height:33px;background:#ececeb"></div><div class="a" style="left:971px;top:552px;width:18px;height:33px;background:#ececeb"></div>
<svg style="left:948px;top:558px" width="74" height="22" viewBox="0 0 74 22"><defs><linearGradient id="gam" x1="0" y1="0" x2="1" y2="0"><stop offset="0" stop-color="#3aa35a"/><stop offset=".5" stop-color="#8a6ab0"/><stop offset="1" stop-color="#e0503a"/></linearGradient><pattern id="dots" width="2" height="2" patternUnits="userSpaceOnUse"><rect width="1" height="1" fill="#777"/><rect x="1" y="1" width="1" height="1" fill="#777"/></pattern></defs>
<rect x="1" y="2" width="17" height="18" fill="url(#dots)" opacity=".55"/><path d="M3 2.4L17.4 12L5 19.6Q1.4 11 3 2.4Z" fill="url(#gam)"/><path d="M3 2.4L10 7L4 12Z" fill="#4fc05a" opacity=".8"/><path d="M5 19.6L11 16L5 12Z" fill="#4a5ac0" opacity=".7"/>
<circle cx="32" cy="11" r="6.4" fill="none" stroke="#c8383a" stroke-width="4.8"/><circle cx="32" cy="11" r="6.4" fill="none" stroke="#7a2a2a" stroke-width="4.8" stroke-dasharray=".8 .8" opacity=".5"/>
<path d="M56.4 19.6Q55.4 18.6 57 16L63.6 8.6L66 10.8L59.4 18Q57.4 20 56.4 19.6Z" fill="#888" stroke="#444" stroke-width=".8"/><path d="M63 5.4L69.4 10.8L67.6 12.6L61.4 7.2Z" fill="#111"/><path d="M66.6 2.6Q69.6 .6 71.4 2.6Q73 4.6 71 7.2L68.6 9.6L64.6 6Z" fill="#111"/></svg>
<span class="t" style="left:1152.4px;top:562px;font-size:12.8px;color:#444;transform:scaleX(.79);transform-origin:0 0">RGBA:</span>
<div class="entry" style="left:1187px;top:553px;width:76px;height:31px;border-radius:4px"></div>
<span class="t" style="left:1197px;top:560.6px;font-size:13.4px;color:#111;letter-spacing:-.35px">000000ff</span>
<!-- blur / opacity -->
<div class="a" style="left:1256px;top:596px;width:19px;height:36px;background:#fff"></div><div class="a" style="left:1256px;top:638px;width:19px;height:36px;background:#fff"></div>
<div class="a" style="left:937px;top:596px;width:320px;height:36px;background:linear-gradient(#f4f4f4,#fff 30%);border:1px solid #a9a9a9;border-radius:4px 0 0 4px;border-right:none"></div>
<div class="a" style="left:937px;top:638px;width:320px;height:36px;background:#fff;border:1px solid #a9a9a9;border-radius:4px 0 0 4px;border-right:none"></div>
<div class="a" style="left:940px;top:641px;width:313px;height:30px;background:#4a90d9"></div>
<span class="t" style="left:944.4px;top:606.1px;font-size:15.2px;color:#111;letter-spacing:-0.61px">Blur (%)</span><span class="t" style="left:1226.4px;top:606.1px;font-size:15.2px;color:#111;letter-spacing:-0.61px">0.0</span>
<span class="t" style="left:944.4px;top:648.1px;font-size:15.2px;color:#fff;letter-spacing:-0.61px">Opacity (%)</span><span class="t" style="left:1210.6px;top:648.1px;font-size:15.2px;color:#fff;letter-spacing:-0.61px">100.0</span>
<div class="up" style="left:1261.4px;top:602.6px"></div><div class="dn g" style="left:1261.4px;top:621px"></div>
<div class="up g" style="left:1261.4px;top:644.6px"></div><div class="dn" style="left:1261.4px;top:663px"></div>
<style>
.mb{top:285px;font-size:12.4px;color:#3a3a3a;text-align:center;letter-spacing:-.9px}
.sl{font-size:15px;color:#555;letter-spacing:-1.4px}
.sp{left:1187px;width:68px;height:35px}
.sp i{position:absolute;left:51px;top:0;width:1px;height:33px;background:#e2e2e2}
.sp b{position:absolute;left:51px;top:17px;width:16px;height:1px;background:#e2e2e2}
.sv{left:1197.4px;font-size:15.2px;color:#111;letter-spacing:-.6px}
</style>
<!-- COMMAND BAR + SNAP BAR -->
<div class="btnp" style="left:1329px;top:139px;width:32px;height:32px;background:linear-gradient(#cdcdcc,#d5d5d4)"></div>
<div class="btnp" style="left:1329px;top:367px;width:32px;height:32px;background:linear-gradient(#cdcdcc,#d5d5d4)"></div>
<div class="btnp" style="left:1329px;top:583px;width:32px;height:32px;background:linear-gradient(#cdcdcc,#d5d5d4)"></div>
<div class="hsep" style="left:1292px;top:279px;width:21px"></div><div class="hsep" style="left:1292px;top:359px;width:21px"></div><div class="hsep" style="left:1292px;top:439px;width:21px"></div><div class="hsep" style="left:1292px;top:553px;width:21px"></div>
<div class="hsep" style="left:1334px;top:177px;width:21px"></div><div class="hsep" style="left:1334px;top:359px;width:21px"></div><div class="hsep" style="left:1334px;top:575px;width:21px"></div>
<svg style="left:1280px;top:134px" width="86" height="560" viewBox="0 0 86 560">
<defs>
 <linearGradient id="fold" x1="0" y1="0" x2="0" y2="1"><stop offset="0" stop-color="#c9b596"/><stop offset="1" stop-color="#937b5c"/></linearGradient>
 <linearGradient id="grn" x1="0" y1="0" x2="0" y2="1"><stop offset="0" stop-color="#b6ef6a"/><stop offset="1" stop-color="#4fae1c"/></linearGradient>
 <linearGradient id="yel" x1="0" y1="0" x2="0" y2="1"><stop offset="0" stop-color="#fff09a"/><stop offset="1" stop-color="#e7b416"/></linearGradient>
 <linearGradient id="clip" x1="0" y1="0" x2="1" y2="1"><stop offset="0" stop-color="#f1c47a"/><stop offset="1" stop-color="#c98f3a"/></linearGradient>
 <radialGradient id="lens2" cx=".4" cy=".35" r=".8"><stop offset="0" stop-color="#fff"/><stop offset="1" stop-color="#a9c3e0"/></radialGradient>
 <g id="snapi"><path d="M2 2L8.6 8.2" stroke="#111" stroke-width="1.5"/><path d="M10.6 10.2L5.2 9.2L9.4 5Z" fill="#111"/><rect x="-2.1" y="-2.1" width="4.2" height="4.2" transform="translate(.4 0) rotate(45)" fill="#a9a9f6" stroke="#2222dd" stroke-width="1.2"/><g transform="translate(11.9 11.4)"><rect x="-2.1" y="-2.1" width="4.2" height="4.2" transform="rotate(45)" fill="#8fc8b2" stroke="#1f8a3f" stroke-width="1.2"/></g></g>
 <g id="zl"><circle cx="0" cy="0" r="8" fill="url(#lens2)" stroke="#1a1a1a" stroke-width="1.4"/><path d="M6 6.2L9 9.2" stroke="#111" stroke-width="2.6" stroke-linecap="round"/></g>
</defs>
<!-- new -->
<rect x="13.6" y="10.2" width="17.2" height="20" rx="1.4" fill="url(#paper)" stroke="#9a9a96" stroke-width="1"/><path d="M14.4 31H30.6" stroke="#000" stroke-width="1" opacity=".18"/>
<path transform="translate(2.9 2.4) scale(.9)" d="M29 9.6L30.8 13.2L34.8 13.8L31.9 16.6L32.6 20.6L29 18.7L25.4 20.6L26.1 16.6L23.2 13.8L27.2 13.2Z" fill="#fffce8" stroke="#ecc80a" stroke-width="1.7" stroke-linejoin="round"/>
<!-- open -->
<path d="M14.4 47.6Q14.4 46.4 15.6 46.4H21.6L23 48.4H30.6Q31.6 48.4 31.6 49.6V60H14.4Z" fill="#8f7656" stroke="#6a553a" stroke-width=".9"/><rect x="18" y="51" width="11.4" height="9" fill="#f4f4f2" stroke="#999" stroke-width=".7"/><path d="M19.6 53.4H27.8M19.6 55.4H27.8M19.6 57.4H27.8" stroke="#9a9a9a" stroke-width=".8"/><path d="M12.2 58.4H33.8L32.2 63.6Q31.8 64.8 30.6 64.8H15.4Q14.2 64.8 13.8 63.6Z" fill="url(#fold)" stroke="#6a553a" stroke-width=".9"/>
<!-- save --><g transform="translate(0 -3)"><path d="M15.4 83.6Q15.4 82 17 82H29Q30.6 82 30.6 83.6V96L31.4 103H14.6L15.4 96Z" fill="#e9e9e7" stroke="#9a9a98" stroke-width="1"/><rect x="15.4" y="96.4" width="15.2" height="6.4" rx="1" fill="#dcdcda" stroke="#8a8a88" stroke-width=".9"/><rect x="19.6" y="98.2" width="6.8" height="2.4" fill="#fff" stroke="#777" stroke-width=".7"/><path d="M20.4 81.4H25.6V87.6H29.8L23 95L16.2 87.6H20.4Z" fill="url(#grn)" stroke="#3a8a12" stroke-width="1" stroke-linejoin="round"/></g>
<!-- print --><g transform="translate(0 -1)"><rect x="14.4" y="115.6" width="17.2" height="6" rx="1" fill="#4a4a4a" stroke="#1a1a1a" stroke-width="1"/><path d="M16.6 117.6H29.4" stroke="#ddd" stroke-width="1.3" stroke-dasharray="2.4 1.2"/><rect x="12.6" y="121" width="20.8" height="9.4" rx="1.6" fill="#e4e4e2" stroke="#1a1a1a" stroke-width="1.1"/><path d="M13.4 126.6H32.6" stroke="#222" stroke-width="2"/><path d="M15.2 127.4H30.8V133.6H15.2Z" fill="#fafaf8" stroke="#1a1a1a" stroke-width="1"/><path d="M17.4 129.4L24 131.6L28.6 129.8" stroke="#9fbf7a" stroke-width="1.1" fill="none"/></g>
<!-- import -->
<path d="M19.4 160.4H28.2L32 164.2V177.4H19.4Z" fill="url(#paper)" stroke="#222" stroke-width="1.1"/><path d="M28.2 160.4V164.2H32" fill="none" stroke="#222" stroke-width=".9"/><path d="M13.6 168.4H23" stroke="#111" stroke-width="1.5"/><path d="M21.6 165L26 168.4L21.6 171.8Z" fill="#111"/>
<!-- export -->
<path d="M14.4 194.4H24.2L28.2 198.4V211.8H14.4Z" fill="url(#paper)" stroke="#222" stroke-width="1.1"/><path d="M24.2 194.4V198.4H28.2" fill="none" stroke="#222" stroke-width=".9"/><path d="M21.4 203.6H30" stroke="#111" stroke-width="1.5"/><path d="M28.6 200.2L33 203.6L28.6 207Z" fill="#111"/>
<!-- undo -->
<path transform="translate(0 1)" d="M12.6 246L20.4 239.4V243.4H27.6Q33.8 243.6 33.8 249.6Q33.6 255.4 27.4 255.6H22.8V252.2H27Q30 252 30 249.6Q30 247.4 27 247.4H20.4V252.4Z" fill="url(#yel)" stroke="#c99a10" stroke-width="1" stroke-linejoin="round"/>
<!-- redo -->
<path d="M33.6 280.6L25.8 274V278H18.6Q12.4 278.2 12.4 284.2Q12.6 290 18.8 290.2H23.4V286.8H19.2Q16.2 286.6 16.2 284.2Q16.2 282 19.2 282H25.8V287Z" fill="url(#grn)" stroke="#3f9a14" stroke-width="1" stroke-linejoin="round"/>
<!-- copy -->
<g stroke="#777" stroke-width=".9"><rect x="13.6" y="319.6" width="11.8" height="11.8" fill="#f6f6f4"/><rect x="20.6" y="326.6" width="11.8" height="12.4" fill="#f6f6f4"/></g><path d="M15.6 322.6H23.4M15.6 324.8H23.4M15.6 327H21M22.6 331.4H30.4M22.6 333.6H30.4M22.6 335.8H28.4" stroke="#8a8a8a" stroke-width=".9"/>
<!-- cut -->
<g transform="translate(.4 5.4)"><path d="M15.8 346.4Q17.4 355 22.4 360.6L25 357.4Q22 350 15.8 346.4Z" fill="#f4f4f2" stroke="#888" stroke-width=".8"/><path d="M30.2 346.4Q28.6 355 23.6 360.6L21 357.4Q24 350 30.2 346.4Z" fill="#fbfbfa" stroke="#888" stroke-width=".8"/><circle cx="18.6" cy="363.4" r="2.8" fill="#f4c0c0" stroke="#c8181f" stroke-width="2.3"/><circle cx="27.6" cy="363.4" r="2.8" fill="#f4c0c0" stroke="#c8181f" stroke-width="2.3"/></g>
<!-- paste -->
<rect x="14.4" y="389" width="16.2" height="16.8" rx="1.6" fill="url(#clip)" stroke="#8a6420" stroke-width="1"/><path d="M19 389.6Q19 386.2 22.4 386.2Q26 386.2 26 389.6L27.2 391.4H17.8Z" fill="#e8e8e6" stroke="#777" stroke-width=".8"/><rect x="22" y="394.6" width="11.8" height="11.6" fill="#f8f8f6" stroke="#888" stroke-width=".9"/><path d="M24 397.6H31.8M24 399.8H31.8M24 402H31.8M24 404.2H29.4" stroke="#9a9a9a" stroke-width=".9"/>
<!-- zoom selection -->
<g transform="translate(22.6 441.6)"><use href="#zl"/><rect x="-4.6" y="-3.6" width="9.2" height="7.2" fill="#fff" stroke="#111" stroke-width="1" stroke-dasharray="1.5 1"/></g>
<!-- zoom drawing -->
<g transform="translate(22.6 475.6)"><use href="#zl"/><rect x="-4.4" y="-4.6" width="5.6" height="5.6" fill="#f0d264" stroke="#5a4a10" stroke-width=".9"/><rect x="-1.2" y="-1.4" width="5.6" height="5.6" fill="#f0d264" stroke="#5a4a10" stroke-width=".9"/></g>
<!-- zoom page -->
<g transform="translate(22.6 509.6)"><use href="#zl"/><rect x="-3.6" y="-4.6" width="7.6" height="9.2" fill="#e8e8e6" stroke="#222" stroke-width="1"/><path d="M-2.4 -3.4H2.8V3.6H-2.4Z" fill="#fff"/></g>
<path d="M20.6 536V545.6L25.6 540.8Z" fill="#222"/><path d="M62.4 536V545.6L67.4 540.8Z" fill="#222"/>
<!-- snap icons -->
<use href="#snapi" x="58.6" y="15"/>
<use href="#snapi" x="58.6" y="60.6"/>
<use href="#snapi" x="58.6" y="243.4"/>
<use href="#snapi" x="58.6" y="459.4"/>
<!-- bbox snaps -->
<g fill="none" stroke="#222" stroke-width="1.1" stroke-dasharray="1.6 1.2"><path d="M57 107.6H71.6V92"/><path d="M56 141.6H70M70.8 127V137.6"/><path d="M57 175.6H71.6M71.6 163V174"/><path d="M57 208.6H71.6V194"/></g>
<g fill="#ccc" stroke="#444" stroke-width=".8"><rect x="-2.2" y="-2.2" width="4.4" height="4.4" transform="translate(70.8 141.6) rotate(45)"/><rect x="-2" y="-2" width="4" height="4" transform="translate(71.4 160) rotate(45)"/><circle cx="60.6" cy="198.4" r="1.9"/></g>
<!-- path snaps -->
<path d="M57.2 276.4Q66.6 277.6 67.8 285.2Q68 288 65.6 289.6Q71 289.4 73.6 284.6" fill="none" stroke="#2a8a2a" stroke-width="1.5"/>
<path d="M57 324.6L74 308.2M57 320.5L74 313.8" stroke="#444" stroke-width="1.1"/><circle cx="65" cy="316.8" r="2.3" fill="#3fa65a" stroke="#1f6a32" stroke-width=".8"/>
<path d="M56.4 340.6Q66.6 341.2 68 350.6Q70 356 73 351.6" fill="none" stroke="#555" stroke-width="1.2"/><rect x="-2.4" y="-2.4" width="4.8" height="4.8" transform="translate(64.6 355.2) rotate(45)" fill="#5fba7a" stroke="#1f7a3c" stroke-width=".9"/>
<path d="M56.4 376.4Q61 376.4 63.6 378.6M66 383Q67.6 387.4 65.6 391Q70.4 391 72.6 385.6" fill="none" stroke="#555" stroke-width="1.2"/><rect x="62.6" y="377" width="4.4" height="4.4" fill="#5fba7a" stroke="#1f7a3c" stroke-width=".9"/>
<path d="M57 426.6L74 409" stroke="#d2222a" stroke-width="1.1"/><path d="M58.4 419.4L61.6 428.6M61.2 417L64.4 426.2M67.8 410L71 419M70.6 407.6L73.8 416.6" stroke="#d2222a" stroke-width="1.1"/><circle cx="65.6" cy="417.8" r="2.4" fill="#3fa65a" stroke="#1f6a32" stroke-width=".8"/>
<path d="M57 503.6H71.6V488.6" fill="none" stroke="#777" stroke-width="1.1"/><circle cx="62.6" cy="495.6" r="1.9" fill="#9fdf9f" stroke="#1f7a3c" stroke-width="1"/>
</svg>
<!-- PALETTE -->
<div class="a" style="left:0;top:702px;width:1353px;height:16px;background:linear-gradient(90deg,#fff 0,#fff 17px,#000000 17px,#000000 33px,#1a1a1a 33px,#1a1a1a 49px,#333333 49px,#333333 65px,#4d4d4d 65px,#4d4d4d 81px,#666666 81px,#666666 97px,#808080 97px,#808080 113px,#999999 113px,#999999 129px,#b3b3b3 129px,#b3b3b3 145px,#cccccc 145px,#cccccc 161px,#e6e6e6 161px,#e6e6e6 177px,#ececec 177px,#ececec 193px,#f2f2f2 193px,#f2f2f2 209px,#f9f9f9 209px,#f9f9f9 225px,#ffffff 225px,#ffffff 241px,#800000 241px,#800000 257px,#ff0000 257px,#ff0000 273px,#808000 273px,#808000 289px,#ffff00 289px,#ffff00 305px,#008000 305px,#008000 321px,#00ff00 321px,#00ff00 337px,#008080 337px,#008080 353px,#00ffff 353px,#00ffff 369px,#000080 369px,#000080 385px,#0000ff 385px,#0000ff 401px,#800080 401px,#800080 417px,#ff00ff 417px,#ff00ff 433px,#2b0000 433px,#2b0000 449px,#550000 449px,#550000 465px,#800000 465px,#800000 481px,#aa0000 481px,#aa0000 497px,#d40000 497px,#d40000 513px,#ff0000 513px,#ff0000 529px,#ff2a2a 529px,#ff2a2a 545px,#ff5555 545px,#ff5555 561px,#ff8080 561px,#ff8080 577px,#ffaaaa 577px,#ffaaaa 593px,#ffd5d5 593px,#ffd5d5 609px,#280b0b 609px,#280b0b 625px,#501616 625px,#501616 641px,#782121 641px,#782121 657px,#a02c2c 657px,#a02c2c 673px,#c83737 673px,#c83737 689px,#d35f5f 689px,#d35f5f 705px,#de8787 705px,#de8787 721px,#e9afaf 721px,#e9afaf 737px,#f4d7d7 737px,#f4d7d7 753px,#241c1c 753px,#241c1c 769px,#483737 769px,#483737 785px,#6c5353 785px,#6c5353 801px,#916f6f 801px,#916f6f 817px,#ac9393 817px,#ac9393 833px,#c8b7b7 833px,#c8b7b7 849px,#e3dbdb 849px,#e3dbdb 865px,#2b1100 865px,#2b1100 881px,#552200 881px,#552200 897px,#803300 897px,#803300 913px,#aa4400 913px,#aa4400 929px,#d45500 929px,#d45500 945px,#ff6600 945px,#ff6600 961px,#ff7f2a 961px,#ff7f2a 977px,#ff9955 977px,#ff9955 993px,#ffb380 993px,#ffb380 1009px,#ffccaa 1009px,#ffccaa 1025px,#ffe6d5 1025px,#ffe6d5 1041px,#28170b 1041px,#28170b 1057px,#502d16 1057px,#502d16 1073px,#784421 1073px,#784421 1089px,#a05a2c 1089px,#a05a2c 1105px,#c87137 1105px,#c87137 1121px,#d38d5f 1121px,#d38d5f 1137px,#deaa87 1137px,#deaa87 1153px,#e9c6af 1153px,#e9c6af 1169px,#f4e3d7 1169px,#f4e3d7 1185px,#241f1c 1185px,#241f1c 1201px,#483e37 1201px,#483e37 1217px,#6c5d53 1217px,#6c5d53 1233px,#917c6f 1233px,#917c6f 1249px,#ac9d93 1249px,#ac9d93 1265px,#c8beb7 1265px,#c8beb7 1281px,#e3dedb 1281px,#e3dedb 1297px,#2b2200 1297px,#2b2200 1313px,#554400 1313px,#554400 1329px,#806600 1329px,#806600 1345px,#aa8800 1345px,#aa8800 1361px)"></div>
<svg style="left:0;top:702px" width="18" height="16" viewBox="0 0 18 16"><path d="M1.6 1L15.6 15M15.6 1L1.6 15" stroke="#7a1414" stroke-width="1.3"/></svg>
<svg style="left:1357px;top:704px" width="6" height="11" viewBox="0 0 6 11"><path d="M5.4 .6V10.4L.4 5.5Z" fill="#222"/></svg>
<div class="a" style="left:0;top:720.4px;width:1353px;height:12.2px;background:#c5c5c5;border-top:1px solid #b0b0b0"></div>
<div class="a" style="left:3px;top:724px;width:258px;height:6px;background:#7c7c7c;border-radius:3px"></div>
<!-- STATUS BAR -->
<span class="t st" style="left:2.6px;top:737px;letter-spacing:-.55px">Fill:</span>
<span class="t st" style="left:2.6px;top:753px;letter-spacing:-.55px">Stroke:</span>
<div class="a" style="left:43px;top:735px;width:79px;height:16px;background:#000"></div>
<span class="t st" style="left:69px;top:753px;font-style:italic;color:#333;letter-spacing:-1.1px">None</span>
<span class="t st" style="left:126px;top:744.4px;letter-spacing:-.8px">O:</span>
<div class="entry" style="left:141px;top:736px;width:46px;height:30px"><div class="a" style="left:30px;top:0;width:1px;height:28px;background:#e2e2e2"></div><div class="a" style="left:30px;top:14px;width:15px;height:1px;background:#e2e2e2"></div><div class="up g" style="left:34px;top:6.4px"></div><div class="dn" style="left:34px;top:20.6px"></div></div>
<div class="a" style="left:150px;top:743px;width:18px;height:16px;overflow:hidden"><span class="t" style="left:1.2px;top:1px;font-size:13.4px;color:#111;letter-spacing:-.3px">100</span></div>
<div class="sep" style="left:190px;top:737px;height:29px;background:#d4d4d4"></div>
<svg style="left:196px;top:744px" width="14" height="12" viewBox="0 0 14 12"><path d="M.8 6.6Q6.6 1.4 12.6 6.6Q6.6 11.6 .8 6.6Z" fill="#fff" stroke="#222" stroke-width="1.1"/><circle cx="6.8" cy="6.6" r="2.4" fill="#222"/><path d="M3 2.6L4 4M6.8 1.4V3.2M10.6 2.6L9.6 4" stroke="#222" stroke-width="1"/></svg>
<svg style="left:219.6px;top:744.4px" width="11" height="13" viewBox="0 0 11 13"><path d="M2.2 2.2Q5 1 7.2 1.8Q8.4 2.6 8.8 6" fill="none" stroke="#222" stroke-width="1.1"/><path d="M2.6 3.4H7" stroke="#555" stroke-width=".8"/><rect x="1.2" y="5.6" width="8.2" height="6" rx=".8" fill="url(#lk)" stroke="#1a1a1a" stroke-width="1.1"/><path d="M4.4 7.6H6.4L5.4 9.8Z" fill="#111"/></svg>
<div class="btn" style="left:237px;top:736px;width:90px;height:31px"></div>
<span class="t" style="left:247.4px;top:744px;font-size:13.6px;color:#333;letter-spacing:-.55px">•Layer 1</span>
<div class="dn" style="left:304.6px;top:749.6px;border-left-width:5px;border-right-width:5px;border-top-width:5px"></div>
<span class="t" id="stat" style="left:333.4px;top:743.1px;font-size:15.2px;color:#2e3436;letter-spacing:-.24px"><b>Star</b> with 3 vertices in layer <b>Layer 1</b>. Click selection to toggle scale/rotation handles.</span>
<div class="sep" style="left:1205px;top:737px;height:29px;background:#d4d4d4"></div>
<span class="t co" style="left:1208px;top:736.6px;letter-spacing:-.8px">X:</span><span class="t co" style="left:1208px;top:752.2px;letter-spacing:-.8px">Y:</span>
<span class="t cm" style="left:1221px;top:736.4px">-137.14</span><span class="t cm" style="left:1227.9px;top:752px">482.86</span>
<span class="t st" style="left:1278px;top:744.2px;letter-spacing:-.6px">Z:</span>
<div class="entry" style="left:1291px;top:736px;width:55px;height:31px"><div class="a" style="left:39.6px;top:0;width:1px;height:29px;background:#e2e2e2"></div><div class="a" style="left:39.6px;top:14px;width:14px;height:1px;background:#e2e2e2"></div><div class="up" style="left:43px;top:6.2px"></div><div class="dn" style="left:43px;top:20.8px"></div></div>
<div class="a" style="left:1300px;top:743px;width:28px;height:16px;overflow:hidden"><span class="t" style="left:7px;top:1.2px;font-size:13.4px;color:#111;letter-spacing:-.5px">35%</span></div>
<style>.st{font-size:12.6px;color:#444}.co{font-size:12.2px;color:#444}.cm{font-family:"Liberation Mono",monospace;font-size:13px;letter-spacing:-.9px;color:#444}</style>
<style>.rl{font-size:10.1px;color:#5c5c5c;letter-spacing:-.45px}</style></body></html>
